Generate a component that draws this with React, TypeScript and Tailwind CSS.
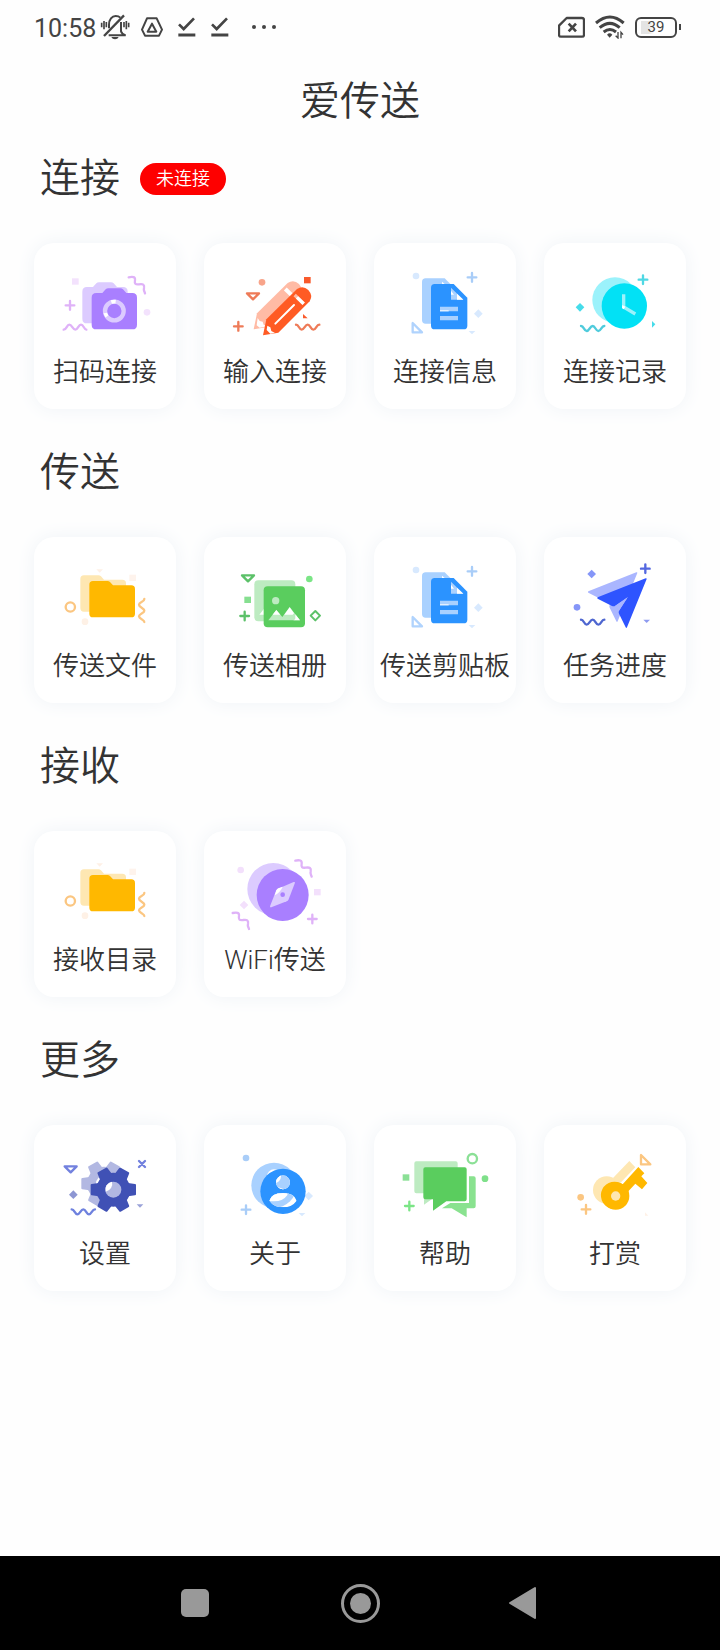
import React from 'react';

type ShapeProps = { x: number; y: number; color: string };

/* ---------- Small decorations shared by the illustrations ---------- */

const Plus: React.FC<ShapeProps> = ({ x, y, color }) => (
  <path d={`M${x - 13} ${y}h26M${x} ${y - 13}v26`} stroke={color} strokeWidth="7" strokeLinecap="round" />
);

const Dot: React.FC<ShapeProps> = ({ x, y, color }) => <circle cx={x} cy={y} r="10" fill={color} />;

const Ring: React.FC<ShapeProps> = ({ x, y, color }) => (
  <circle cx={x} cy={y} r="14" stroke={color} strokeWidth="7" />
);

const Square: React.FC<ShapeProps> = ({ x, y, color }) => (
  <rect x={x - 10} y={y - 10} width="20" height="19" fill={color} />
);

const Diamond: React.FC<ShapeProps> = ({ x, y, color }) => (
  <path d={`M${x} ${y - 13}l13 13l-13 13l-13 -13Z`} fill={color} />
);

const Wave: React.FC<ShapeProps> = ({ x, y, color }) => (
  <path
    d={`M${x} ${y}c9 0 9 15 17 15s10 -15 18 -15s9 15 17 15s9 -15 18 -15`}
    stroke={color}
    strokeWidth="7"
    strokeLinecap="round"
  />
);

const Squiggle: React.FC<ShapeProps> = ({ x, y, color }) => (
  <path
    d={`M${x} ${y}c13 -3 20 -1 19 8c-2 12 1 14 12 13c12 -2 17 1 15 11c-2 8 1 9 3 16`}
    stroke={color}
    strokeWidth="7"
    strokeLinecap="round"
  />
);

const TriangleDown: React.FC<ShapeProps> = ({ x, y, color }) => (
  <path d={`M${x - 18} ${y}h36l-18 18Z`} stroke={color} strokeWidth="7" strokeLinejoin="round" />
);

const TinyTriangle: React.FC<ShapeProps> = ({ x, y, color }) => (
  <path d={`M${x - 10} ${y}h20l-10 10Z`} fill={color} />
);

const Corner: React.FC<ShapeProps> = ({ x, y, color }) => (
  <path d={`M${x} ${y}v28h28Z`} stroke={color} strokeWidth="7" strokeLinejoin="round" />
);

const Art: React.FC<{ box: string; children: React.ReactNode }> = ({ box, children }) => (
  <svg viewBox={box} fill="none" aria-hidden="true" className="h-[100px] w-[142px] max-w-full">
    {children}
  </svg>
);

/* ---------- Illustrations ---------- */

const CAMERA =
  'M229 188h18l10 -11q3 -3 8 -3h36q5 0 8 3l10 11h18q14 0 14 14v81q0 14 -14 14h-108q-14 0 -14 -14v-81q0 -14 14 -14Z';

const CameraArt = () => (
  <Art box="42 38 426 300">
    <Square x={166} y={154} color="#f3e2fd" />
    <Plus x={150} y={225} color="#dfb2f8" />
    <path
      d="M131 298c9 0 9 -15 17 -15s10 15 18 15s9 -15 17 -15s9 15 16 15"
      stroke="#dfb2f8"
      strokeWidth="7"
      strokeLinecap="round"
    />
    <Squiggle x={326} y={141} color="#dfb2f8" />
    <Dot x={381} y={246} color="#f3e2fd" />
    <path d={CAMERA} transform="translate(-28 -18)" fill="#dccbff" />
    <path d={CAMERA} fill="#a97fff" />
    <circle cx="283" cy="242" r="28" stroke="#dccbff" strokeWidth="13" />
    <path d="M274 215q6 -2 13 -1M256 248q1 5 5 10" stroke="#fff" strokeWidth="11" />
  </Art>
);

const PENCIL = 'M729 315l10 -48l92 -91q18 -12 34 3q15 17 4 34l-94 94Z';

const PencilArt = () => (
  <Art box="552 38 426 300">
    <Dot x={726} y={156} color="#f8a48a" />
    <Square x={862} y={150} color="#f95a2c" />
    <TriangleDown x={699} y={189} color="#ee7b58" />
    <Plus x={655} y={288} color="#ee7b58" />
    <Wave x={828} y={283} color="#ee7b58" />
    <path d="M849 251v13h14Z" fill="#f95a2c" />
    <g transform="translate(-28 -18)">
      <path d={PENCIL} fill="#ffbba5" />
      <path d="M824 194l29 28" stroke="#fff" strokeWidth="12" />
      <path d="M741 281l6 9l9 2l3 9l10 5l-22 4l-9 -7Z" fill="#fff" />
    </g>
    <path d={PENCIL} fill="#ff5b24" />
    <path d="M824 194l27 26" stroke="#ffbba5" strokeWidth="10" />
    <path d="M831 201l20 19" stroke="#fff" strokeWidth="10" />
    <path d="M766 280l56 -56" stroke="#fff" strokeWidth="6" strokeLinecap="round" />
    <path d="M742 286l9 5l3 11l11 6l-14 2l-11 -11Z" fill="#fff" />
  </Art>
);

const DOC = 'M224 161h57l41 41v84q0 11 -11 11h-87q-11 0 -11 -11v-114q0 -11 11 -11Z';

const DocumentArt = () => (
  <Art box="42 38 426 300">
    <Dot x={168} y={137} color="#d8e9fe" />
    <Plus x={336} y={141} color="#a9cdf8" />
    <Diamond x={355} y={250} color="#d8e9fe" />
    <Corner x={158} y={278} color="#b0d3fd" />
    <TinyTriangle x={336} y={302} color="#d8e9fe" />
    <path d={DOC} transform="translate(-27 -17)" fill="#a9d1ff" />
    <path d="M246 154v8h9Z" fill="#fff" />
    <path d={DOC} fill="#2b93ff" />
    <path d="M273 172v36h37Z" fill="#a9d1ff" />
    <path d="M291 190v18h19Z" fill="#fff" />
    <path d="M273 181v12h9Z" fill="#fff" />
    <path d="M240 229h54v14h-54ZM240 257h54v13h-54Z" fill="#a9d1ff" />
    <path d="M240 240h26v3h-26Z" fill="#fff" />
  </Art>
);

const ClockArt = () => (
  <Art box="552 38 426 300">
    <Plus x={849} y={148} color="#4fd8e4" />
    <Diamond x={660} y={231} color="#45dcea" />
    <Wave x={663} y={287} color="#4fcbdc" />
    <path d="M876 272v20l10 -10Z" fill="#45dcea" />
    <circle cx="765" cy="209" r="68" fill="#9bf2fb" />
    <circle cx="793" cy="227" r="68" fill="#02e1f5" />
    <path d="M791 192v38l35 21" stroke="#9bf2fb" strokeWidth="10" />
    <path d="M787 224l9 5l-5 8l-5 -4Z" fill="#fff" />
  </Art>
);

const FOLDER =
  'M219 152h43q5 0 8 3l9 10h55q11 0 11 11v74q0 11 -11 11h-115q-11 0 -11 -11v-87q0 -11 11 -11Z';

const FolderArt = () => (
  <Art box="42 20 426 300">
    <TinyTriangle x={239} y={117} color="#fef0e6" />
    <Square x={338} y={143} color="#fef3ec" />
    <Dot x={195} y={274} color="#fef1e6" />
    <Ring x={151} y={230} color="#fbc681" />
    <path
      d="M373 206c0 9 -16 9 -16 17s16 10 16 18s-16 9 -16 17s16 9 16 17"
      stroke="#fbc681"
      strokeWidth="7"
      strokeLinecap="round"
    />
    <path d={FOLDER} transform="translate(-27 -17)" fill="#fee7b2" />
    <path d={FOLDER} fill="#ffb800" />
  </Art>
);

const GalleryArt = () => (
  <Art box="552 20 426 300">
    <TriangleDown x={684} y={135} color="#5cc169" />
    <Dot x={868} y={146} color="#7be586" />
    <Square x={683} y={209} color="#86df90" />
    <Plus x={674} y={257} color="#5cc169" />
    <path d="M886 242l14 14l-14 14l-14 -14Z" stroke="#5cc169" strokeWidth="6" strokeLinejoin="round" />
    <rect x="703" y="150" width="123" height="123" rx="12" fill="#bdebc1" />
    <path d="M718 253l14 -18v18Z" fill="#fff" />
    <rect x="731" y="168" width="124" height="123" rx="12" fill="#5acd5e" />
    <circle cx="767" cy="211" r="11" fill="#bdebc1" />
    <path d="M745 270l24 -31l18 21l22 -30l31 40Z" fill="#bdebc1" />
    <path d="M755 257l14 -18l12 14h-23ZM793 253l16 -22l13 18l-4 4Z" fill="#fff" />
    <path d="M826 252l14 18h-20q6 -2 6 -6Z" fill="#fff" />
  </Art>
);

const PLANE =
  'M860 146q0 -3 -3 -2l-144 57q-3 2 0 4l43 22q5 2 9 0l38 -26l-26 40q-2 5 0 9l20 41q2 4 4 0Z';

const PlaneArt = () => (
  <Art box="552 20 426 300">
    <Diamond x={695} y={131} color="#8596f8" />
    <Plus x={856} y={115} color="#5468e0" />
    <Dot x={651} y={231} color="#8596f8" />
    <Wave x={663} y={268} color="#4e66d0" />
    <TinyTriangle x={860} y={268} color="#8e9bf0" />
    <path d={PLANE} transform="translate(-28 -18)" fill="#aab6ff" />
    <path d={PLANE} fill="#2e54ff" />
    <path d="M765 227l38 -26l-26 40Z" fill="#aab6ff" />
  </Art>
);

const CompassArt = () => (
  <Art box="552 33 426 300">
    <Dot x={662} y={150} color="#f3e0fc" />
    <Square x={892} y={217} color="#f3e0fc" />
    <Diamond x={672} y={255} color="#f3e0fc" />
    <Plus x={877} y={297} color="#dfb2f8" />
    <Squiggle x={826} y={122} color="#dfb2f8" />
    <Squiggle x={638} y={279} color="#dfb2f8" />
    <circle cx="760" cy="207" r="78" fill="#dccbff" />
    <circle cx="788" cy="225" r="78" fill="#a97fff" />
    <path d="M825 188q0 -3 -4 -2l-47 20q-4 2 -6 7l-18 46q0 4 4 3l46 -18q4 -2 6 -6Z" fill="#dccbff" />
    <path d="M764 226l5 -15q2 -4 6 -6l13 -5q-6 16 -24 26Z" fill="#fff" />
    <circle cx="788" cy="224" r="7" fill="#a97fff" />
  </Art>
);

const Gear: React.FC<{ x: number; y: number; color: string }> = ({ x, y, color }) => (
  <g transform={`translate(${x} ${y})`} fill={color}>
    <circle r="51" />
    {[0, 60, 120].map((angle) => (
      <path
        key={angle}
        d="M-68 -14q0 -3 3 -3l21 -3l8 -8h72l8 8l21 3q3 0 3 3v28q0 3 -3 3l-21 3l-8 8h-72l-8 -8l-21 -3q-3 0 -3 -3Z"
        transform={`rotate(${angle})`}
      />
    ))}
  </g>
);

const GearArt = () => (
  <Art box="42 29 426 300">
    <TriangleDown x={152} y={153} color="#7281de" />
    <path d="M357 137l18 18M375 137l-18 18" stroke="#7281de" strokeWidth="7" strokeLinecap="round" />
    <Diamond x={160} y={238} color="#8d96d3" />
    <Wave x={155} y={282} color="#6e81de" />
    <TinyTriangle x={360} y={267} color="#9aa2d8" />
    <Gear x={252} y={205} color="#b2b8e2" />
    <circle cx="252" cy="205" r="24" fill="#fff" />
    <Gear x={280} y={223} color="#4051b5" />
    <circle cx="280" cy="223" r="24" fill="#b2b8e2" />
    <path d="M257 229A24 24 0 0 1 276 199A24 24 0 0 1 257 229Z" fill="#fff" />
  </Art>
);

const BUST = 'M748 256q6 -22 41 -23q35 1 41 23q-14 20 -41 20t-41 -20Z';

const PersonArt = () => (
  <Art box="552 29 426 300">
    <defs>
      <clipPath id="person-cutout">
        <circle cx="789" cy="201" r="21" />
        <path d={BUST} />
      </clipPath>
    </defs>
    <Dot x={678} y={128} color="#a9cdf8" />
    <Plus x={678} y={283} color="#a9cdf8" />
    <Diamond x={866} y={242} color="#d8e9fe" />
    <TinyTriangle x={846} y={293} color="#d8e9fe" />
    <circle cx="762" cy="210" r="68" fill="#a9d1ff" />
    <circle cx="762" cy="183" r="21" fill="#fff" />
    <circle cx="789" cy="228" r="68" fill="#2b93ff" />
    <g clipPath="url(#person-cutout)">
      <path d="M740 170h100v110h-100Z" fill="#fff" />
      <circle cx="762" cy="210" r="68" fill="#a9d1ff" />
      <circle cx="762" cy="183" r="21" fill="#fff" />
      <path d={BUST} transform="translate(-27 -18)" fill="#fff" />
    </g>
  </Art>
);

const BUBBLE = 'M196 156h118q6 0 6 6v90q0 6 -6 6h-55l-40 28v-34h-23q-6 0 -6 -6v-84q0 -6 6 -6Z';

const ChatArt = () => (
  <Art box="42 29 426 300">
    <Ring x={337} y={130} color="#8be096" />
    <Square x={138} y={187} color="#8be096" />
    <Dot x={375} y={190} color="#7fe08a" />
    <Plus x={148} y={272} color="#7be586" />
    <path d={BUBBLE} transform="translate(-27 -18)" fill="#bdebc1" />
    <path d="M327 183h14q6 0 6 6v84q0 6 -6 6h-21v27l-45 -27h-29l25 -16h56Z" fill="#89e28f" />
    <path d={BUBBLE} fill="#5acd5e" />
  </Art>
);

const KEY =
  'M788 207l47 -52l18 19l-9 9l18 20l-16 19l-20 -17l-21 23q1 8 -1 19a41 41 0 1 1 -16 -40Z';

const KeyArt = () => (
  <Art box="552 29 426 300">
    <Corner x={843} y={119} color="#fbc681" />
    <Dot x={662} y={246} color="#fbc681" />
    <Plus x={678} y={282} color="#fbc681" />
    <path d="M855 291v10h10Z" fill="#fef1e6" />
    <g transform="translate(-27 -18)" fill="#fee7b2">
      <circle cx="767" cy="242" r="41" />
      <path d="M786 206l49 -51l18 19l-50 52Z" />
    </g>
    <circle cx="767" cy="242" r="41" fill="#ffb800" />
    <path d={KEY} fill="#ffb800" />
    <circle cx="767" cy="242" r="14" fill="#fee7b2" />
  </Art>
);

/* ---------- Status bar ---------- */

const BellOff = () => (
  <svg viewBox="304 42 90 78" fill="none" stroke="#444" strokeWidth="6" aria-hidden="true" className="ml-1 h-[26px] w-[30px]">
    <path d="M309 68v14M316 63v25M323 66v16M376 66v16M383 63v25M390 68v14" strokeWidth="5" />
    <path d="M331 85V74c0 -16 9 -26 20 -26q9 0 14 5M367 66v28q2 8 14 12H330" />
    <path d="M316 108L376 46" strokeWidth="7" />
    <path d="M338 111h22q-3 7 -11 7t-11 -7Z" fill="#444" stroke="none" />
  </svg>
);

const DriveTriangle = () => (
  <svg viewBox="426 50 66 60" fill="none" stroke="#444" strokeWidth="6" strokeLinejoin="round" aria-hidden="true" className="ml-[11px] h-5 w-[22px]">
    <path d="M444 54h29l16 34l-9 18h-42l-9 -18Z" />
    <path d="M459 70l13 24h-26Z" />
  </svg>
);

const CheckDone = () => (
  <svg viewBox="536 48 54 66" fill="none" stroke="#444" strokeWidth="8" aria-hidden="true" className="ml-[15px] h-[22px] w-[18px]">
    <path d="M539 73l14 14l31 -32" />
    <path d="M537 105h51" strokeWidth="9" />
  </svg>
);

const MoreDots = () => (
  <svg viewBox="756 70 78 24" fill="#444" aria-hidden="true" className="ml-[22px] h-2 w-[26px]">
    <circle cx="765" cy="82" r="6" />
    <circle cx="795" cy="82" r="6" />
    <circle cx="825" cy="82" r="6" />
  </svg>
);

const SimOff = () => (
  <svg viewBox="594 48 81 66" fill="none" stroke="#444" strokeWidth="7" aria-hidden="true" className="h-[22px] w-[27px]">
    <path d="M620 54h46q6 0 6 6v44q0 6 -6 6h-63q-6 0 -6 -6V77Z" strokeLinejoin="round" />
    <path d="M626 71l22 23M648 71l-22 23" strokeWidth="8" />
  </svg>
);

const WifiActive = () => (
  <svg viewBox="704 45 90 72" fill="none" stroke="#444" strokeWidth="9" aria-hidden="true" className="h-6 w-[30px]">
    <path d="M707 69q42 -36 83 0M718 83q31 -26 60 0M730 96q19 -15 37 0" />
    <path d="M740 104q8 -8 16 0l-8 9Z" fill="#444" stroke="none" />
    <path d="M773 96v18l-7 -7M782 115V97l6 7" strokeWidth="4" />
  </svg>
);

const StatusBar = () => (
  <div className="flex h-[54px] items-center justify-between pr-[39px] pl-[34px] font-[Roboto,sans-serif] font-normal text-[#444]">
    <div className="flex items-center">
      <span className="pt-1 text-[25px] leading-7">10:58</span>
      <BellOff />
      <DriveTriangle />
      <CheckDone />
      <CheckDone />
      <MoreDots />
    </div>
    <div className="flex items-center gap-2.5">
      <SimOff />
      <WifiActive />
      <div className="flex items-center gap-0.5">
        <span className="flex h-[21px] w-[42px] items-center justify-center rounded-md border-2 border-[#444] bg-linear-to-r from-[#e4e4e4] from-30% to-white to-45% bg-clip-content px-1 py-0.5 text-[15px] leading-4">
          39
        </span>
        <span className="h-1.5 w-0.5 bg-[#444]" />
      </div>
    </div>
  </div>
);

/* ---------- Page content ---------- */

type Entry = { label: string; art: React.FC };
type Section = { title: string; status?: string; entries: Entry[] };

const sections: Section[] = [
  {
    title: '连接',
    status: '未连接',
    entries: [
      { label: '扫码连接', art: CameraArt },
      { label: '输入连接', art: PencilArt },
      { label: '连接信息', art: DocumentArt },
      { label: '连接记录', art: ClockArt },
    ],
  },
  {
    title: '传送',
    entries: [
      { label: '传送文件', art: FolderArt },
      { label: '传送相册', art: GalleryArt },
      { label: '传送剪贴板', art: DocumentArt },
      { label: '任务进度', art: PlaneArt },
    ],
  },
  {
    title: '接收',
    entries: [
      { label: '接收目录', art: FolderArt },
      { label: 'WiFi传送', art: CompassArt },
    ],
  },
  {
    title: '更多',
    entries: [
      { label: '设置', art: GearArt },
      { label: '关于', art: PersonArt },
      { label: '帮助', art: ChatArt },
      { label: '打赏', art: KeyArt },
    ],
  },
];

const EntryCard: React.FC<{ entry: Entry }> = ({ entry }) => {
  const Picture = entry.art;
  return (
    <button
      type="button"
      className="flex flex-col items-center rounded-[20px] bg-white pb-[19px] shadow-[0_0_20px_#f0f4f8]"
    >
      <Picture />
      <span className="mt-[11px] text-[26px] leading-9 whitespace-nowrap">{entry.label}</span>
    </button>
  );
};

const NavigationBar = () => (
  <nav className="flex h-[94px] items-center justify-center gap-[125px] bg-black">
    <button type="button" aria-label="最近任务" className="flex size-10 items-center justify-center">
      <span className="size-7 rounded-[5px] bg-[#999]" />
    </button>
    <button type="button" aria-label="主屏幕" className="flex size-10 items-center justify-center">
      <span className="flex size-[39px] items-center justify-center rounded-full border-3 border-[#999]">
        <span className="size-[21px] rounded-full bg-[#999]" />
      </span>
    </button>
    <button type="button" aria-label="返回" className="flex size-10 items-center">
      <svg viewBox="0 0 32 34" fill="#999" stroke="#999" strokeWidth="2" strokeLinejoin="round" aria-hidden="true" className="h-[34px] w-8">
        <path d="M30 2v30L5 17Z" />
      </svg>
    </button>
  </nav>
);

const App: React.FC = () => {
  return (
    <div className="flex min-h-screen flex-col bg-[#fefefe] font-[Roboto,'Noto_Sans_CJK_SC',sans-serif] font-[350] text-[#333]">
      <StatusBar />
      <header className="flex h-[95px] items-center justify-center">
        <h1 className="text-[40px] leading-[60px]">爱传送</h1>
      </header>

      <main className="flex grow flex-col gap-[34px] px-[34px] pb-8">
        {sections.map((section) => (
          <section key={section.title}>
            <div className="flex items-center gap-5 pl-1.5">
              <h2 className="text-[40px] leading-[60px]">{section.title}</h2>
              {section.status && (
                <span className="rounded-full bg-[#fe0000] px-4 text-[18px] leading-8 text-white">
                  {section.status}
                </span>
              )}
            </div>
            <div className="mt-[34px] grid grid-cols-4 gap-7">
              {section.entries.map((entry) => (
                <EntryCard key={entry.label} entry={entry} />
              ))}
            </div>
          </section>
        ))}
      </main>

      <NavigationBar />
    </div>
  );
};

export default App;
